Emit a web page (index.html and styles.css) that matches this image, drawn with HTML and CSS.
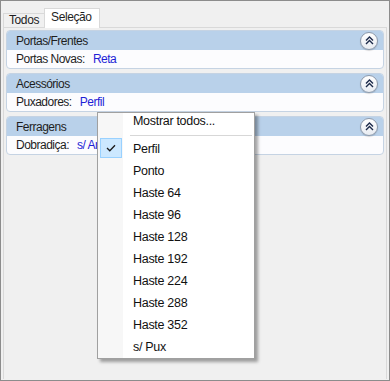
FILE: index.html
```html
<!DOCTYPE html>
<html lang="pt">
<head>
    <meta charset="UTF-8">
    <title>Seleção</title>
    <link rel="stylesheet" href="styles.css">
</head>
<body>
    <div class="window">
        <div class="tabs">
            <div class="tab">Todos</div>
            <div class="tab active">Seleção</div>
        </div>

        <div class="panel">
            <div class="group">
                <div class="group-head">
                    <span>Portas/Frentes</span>
                    <span class="collapse">
                        <svg width="9" height="9" viewBox="0 0 9 9"><path d="M1 4.5 L4.5 1 L8 4.5 M1 8 L4.5 4.5 L8 8" fill="none" stroke="#1c2a4a" stroke-width="1.4"/></svg>
                    </span>
                </div>
                <div class="row"><span class="label">Portas Novas:</span><span class="value">Reta</span></div>
            </div>

            <div class="group">
                <div class="group-head">
                    <span>Acessórios</span>
                    <span class="collapse">
                        <svg width="9" height="9" viewBox="0 0 9 9"><path d="M1 4.5 L4.5 1 L8 4.5 M1 8 L4.5 4.5 L8 8" fill="none" stroke="#1c2a4a" stroke-width="1.4"/></svg>
                    </span>
                </div>
                <div class="row"><span class="label">Puxadores:</span><span class="value">Perfil</span></div>
            </div>

            <div class="group">
                <div class="group-head">
                    <span>Ferragens</span>
                    <span class="collapse">
                        <svg width="9" height="9" viewBox="0 0 9 9"><path d="M1 4.5 L4.5 1 L8 4.5 M1 8 L4.5 4.5 L8 8" fill="none" stroke="#1c2a4a" stroke-width="1.4"/></svg>
                    </span>
                </div>
                <div class="row"><span class="label">Dobradiça:</span><span class="value">s/ Ar</span></div>
            </div>
        </div>

        <div class="menu">
            <div class="menu-item first">Mostrar todos...</div>
            <div class="menu-sep"></div>
            <div class="menu-item checked">
                <span class="check">
                    <svg width="10" height="8" viewBox="0 0 10 8"><path d="M1 4 L3.8 6.8 L9 1.2" fill="none" stroke="#1a1a1a" stroke-width="1.3"/></svg>
                </span>
                Perfil
            </div>
            <div class="menu-item">Ponto</div>
            <div class="menu-item">Haste 64</div>
            <div class="menu-item">Haste 96</div>
            <div class="menu-item">Haste 128</div>
            <div class="menu-item">Haste 192</div>
            <div class="menu-item">Haste 224</div>
            <div class="menu-item">Haste 288</div>
            <div class="menu-item">Haste 352</div>
            <div class="menu-item">s/ Pux</div>
        </div>
    </div>
</body>
</html>
```

FILE: styles.css
```css
* {
    margin: 0;
    padding: 0;
    box-sizing: border-box;
}

body {
    font-family: 'Liberation Sans', Arial, sans-serif;
    font-size: 12px;
    color: #1e1e1e;
    background: #f0f0f0;
}

.window {
    position: relative;
    width: 390px;
    height: 381px;
    border: 1px solid #8c8c8c;
    background: #f0f0f0;
    overflow: hidden;
}

/* tab strip */
.tabs {
    display: flex;
    align-items: flex-end;
    height: 26px;
    padding-left: 2px;
    letter-spacing: -0.4px;
}

.tab {
    height: 14px;
    padding: 0 5px;
    border: 1px solid #d9d9d9;
    border-bottom: none;
    line-height: 13px;
    background: #f0f0f0;
}

.tab.active {
    height: 20px;
    padding: 0 7px 0 6px;
    line-height: 16px;
    background: #fff;
    border-color: #d9d9d9;
    position: relative;
    top: 1px;
    margin-left: -1px;
}

.panel {
    margin: 0 2px;
    height: 352px;
    border: 1px solid #d9d9d9;
    border-bottom: none;
    padding: 2px 2px 0;
    letter-spacing: -0.5px;
}

/* collapsible groups */
.group {
    border: 1px solid #c5d3e3;
    border-radius: 4px;
    margin-bottom: 4px;
    background: #fcfcfe;
    overflow: hidden;
}

.group-head {
    display: flex;
    justify-content: space-between;
    align-items: center;
    height: 19px;
    padding: 0 5px 0 9px;
    background: #b9d1ea;
}

.collapse {
    width: 18px;
    height: 18px;
    border-radius: 50%;
    border: 1px solid #8e9aab;
    background: linear-gradient(#ffffff, #e8ecf2);
    display: flex;
    align-items: center;
    justify-content: center;
    box-shadow: 0 1px 1px rgba(0,0,0,0.15);
}

.row {
    display: flex;
    height: 18px;
    align-items: center;
    padding-left: 9px;
    white-space: nowrap;
}

.label {
    margin-right: 8px;
}

.value {
    color: #1f1fd6;
}

/* context menu */
.menu {
    position: absolute;
    left: 96px;
    top: 111px;
    width: 158px;
    height: 247px;
    background: #fff;
    border: 1px solid #a0a0a0;
    box-shadow: 3px 3px 3px rgba(0,0,0,0.35);
    background-image: linear-gradient(90deg, #f7f7f7 0, #f7f7f7 25px, #fff 25px);
}

.menu-item {
    position: relative;
    height: 22px;
    line-height: 22px;
    padding-left: 35px;
    font-size: 12.5px;
    letter-spacing: -0.3px;
    color: #111;
}

.menu-item.first {
    height: 20px;
    line-height: 16px;
}

.menu-sep {
    height: 1px;
    margin: 2px 2px 2px 32px;
    background: #d7d7d7;
}

.check {
    position: absolute;
    left: 2px;
    top: 0;
    width: 22px;
    height: 20px;
    background: #cce8ff;
    border: 1px solid #99d1ff;
    display: flex;
    align-items: center;
    justify-content: center;
}
```
